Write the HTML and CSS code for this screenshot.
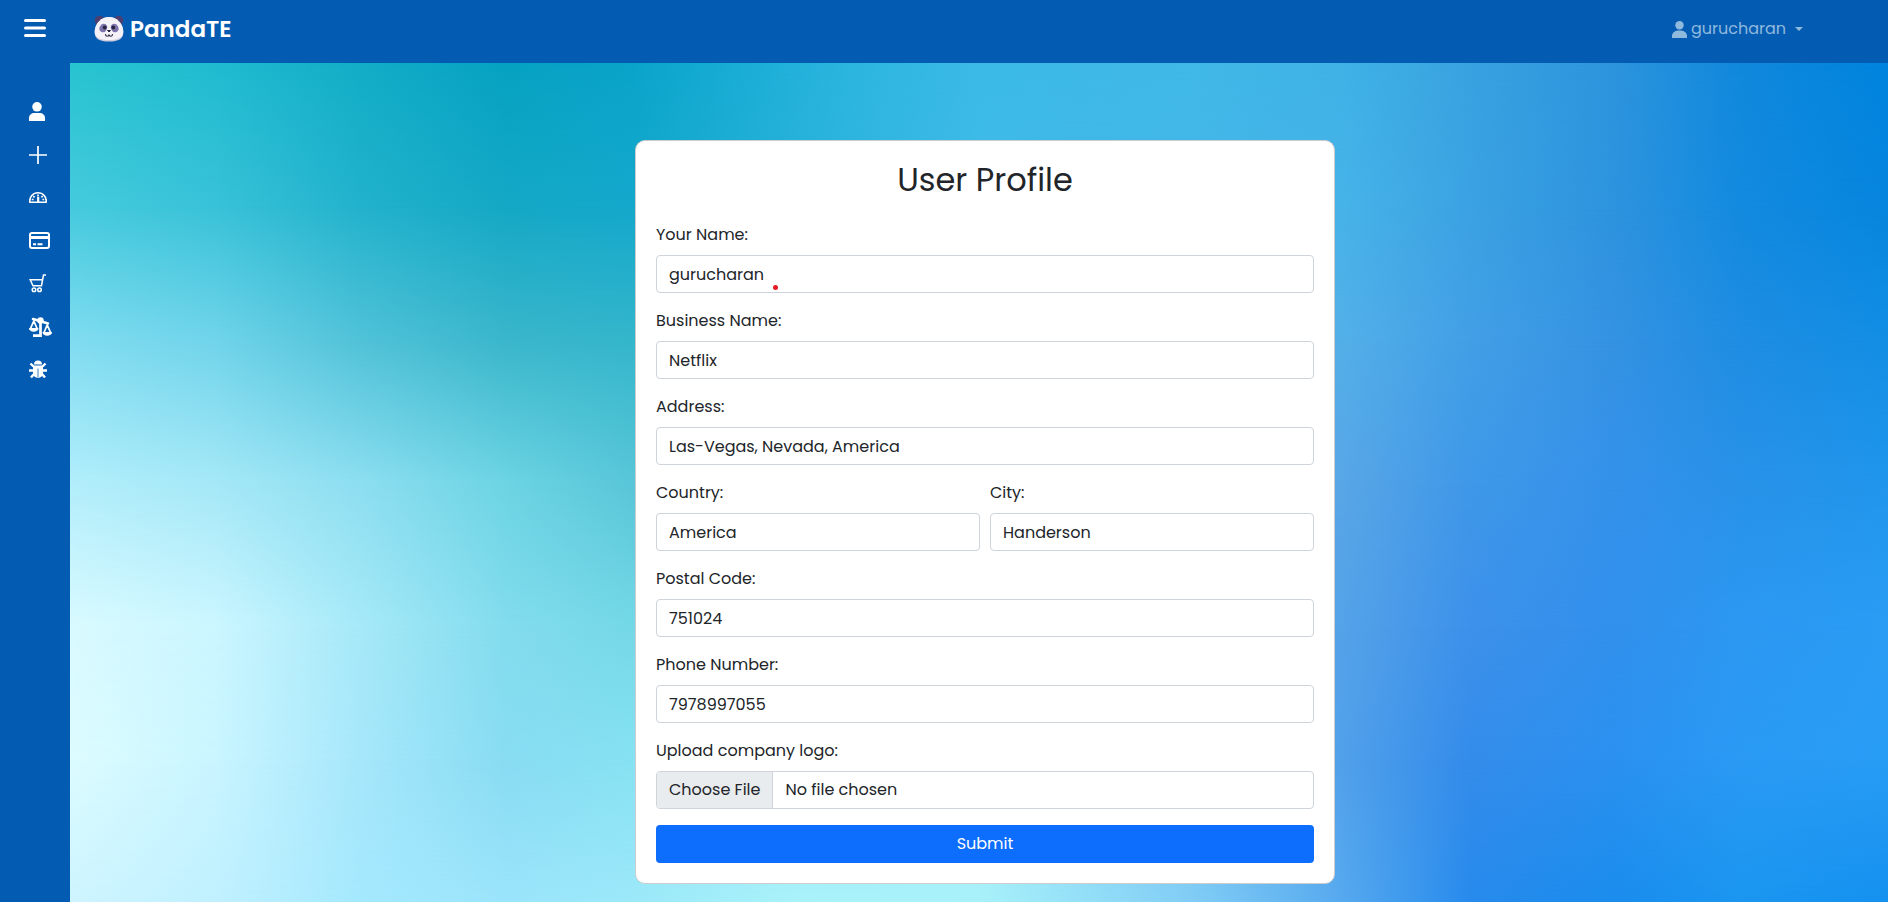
FILE: index.html
```html
<!DOCTYPE html>
<html lang="en">
<head>
<meta charset="utf-8">
<meta name="viewport" content="width=device-width, initial-scale=1">
<title>PandaTE - User Profile</title>
<link rel="stylesheet" href="styles.css">
</head>
<body>
<div class="app">
  <header class="navbar">
    <button class="menu-toggle" type="button" aria-label="Toggle menu">
      <svg width="22" height="18" viewBox="0 0 22 18"><path d="M1.5 1.5h19M1.5 9h19M1.5 16.500h19" stroke="#fff" stroke-width="3" stroke-linecap="round"/></svg>
    </button>
    <a class="brand" href="#">
      <svg width="30" height="28" viewBox="0 0 30 28">
        <circle cx="5.500" cy="5.500" r="4.800" fill="#4b3f72"/><circle cx="24.500" cy="5.500" r="4.800" fill="#4b3f72"/>
        <path d="M15 2C22 2 29 8 29.300 17c.2 7-5 9.500-14.300 9.500S.5 24 .7 17C1 8 8 2 15 2z" fill="#d3cde0"/>
        <path d="M15 2C22 2 29 8 29.300 16c.2 6.500-5 9-14.300 9S.5 22.500.7 16C1 8 8 2 15 2z" fill="#f4f2f7"/>
        <ellipse cx="9.300" cy="13" rx="3.700" ry="4.300" transform="rotate(25 9.300 13)" fill="#7d74ad"/><ellipse cx="20.700" cy="13" rx="3.700" ry="4.300" transform="rotate(-25 20.700 13)" fill="#7d74ad"/>
        <circle cx="10.700" cy="12.500" r="1.900" fill="#2b2440"/><circle cx="19.300" cy="12.500" r="1.900" fill="#2b2440"/>
        <path d="M13.500 15.500h3L15 17z" fill="#2b2440" stroke="#2b2440" stroke-linejoin="round"/>
        <path d="M11.500 19.500c.3 2.300 3.300 2.300 3.500 0 .2 2.300 3.200 2.300 3.500 0" fill="none" stroke="#2b2440" stroke-width="1.200" stroke-linecap="round"/>
      </svg>
      <span>PandaTE</span>
    </a>
    <button class="user-menu" type="button">
      <svg width="15" height="17" viewBox="0 0 15 17" fill="currentColor"><circle cx="7.500" cy="4.200" r="4.200"/><path d="M0 17v-2c0-3.500 3-5.500 7.500-5.500S15 11.500 15 15v2z"/></svg>
      <span>gurucharan</span>
      <span class="caret"></span>
    </button>
  </header>
  <div class="body">
    <nav class="sidebar">
      <a href="#" aria-label="Profile"><svg width="16" height="19" viewBox="0 0 16 19" fill="#fff"><circle cx="8" cy="4.800" r="4.800"/><path d="M0 19v-3c0-3 2.500-5 5.500-5h5c3 0 5.500 2 5.500 5v3z"/></svg></a>
      <a href="#" aria-label="Add"><svg width="18" height="18" viewBox="0 0 18 18"><path d="M9 0v18M0 9h18" stroke="#fff" stroke-width="1.700"/></svg></a>
      <a href="#" aria-label="Dashboard"><svg width="18" height="11" viewBox="0 0 18 11" fill="none" stroke="#fff"><path d="M.8 10.200C.2 5 4 .8 9 .8s8.800 4.200 8.200 9.400z" stroke-width="1.600" stroke-linejoin="round"/><path d="M9 2.500v2M4.300 4l1.300 1.300M13.700 4l-1.300 1.300M2.800 7.500h1.800M13.400 7.500h1.800" stroke-width="1.700"/><path d="M9.200 5v5" stroke-width="2.200"/></svg></a>
      <a href="#" aria-label="Billing"><svg width="21" height="17" viewBox="0 0 21 17"><rect x="1" y="1" width="19" height="15" rx="2" fill="none" stroke="#fff" stroke-width="2"/><path d="M1 5.500h19" stroke="#fff" stroke-width="3"/><path d="M4 12.200h3M8.500 12.200h5" stroke="#fff" stroke-width="2"/></svg></a>
      <a href="#" aria-label="Cart"><svg width="18" height="19" viewBox="0 0 18 19" fill="none" stroke="#fff" stroke-width="1.500"><path d="M17 1h-2.500l-2 10.700H4L1.200 5.700h12.200"/><circle cx="5" cy="15.800" r="1.800"/><circle cx="10.500" cy="15.800" r="1.800"/></svg></a>
      <a href="#" aria-label="Compare"><svg width="23" height="20" viewBox="0 0 23 20" fill="none" stroke="#fff"><path d="M4 2l15 4.500" stroke-width="2.500" stroke-linecap="round"/><circle cx="11.500" cy="3.400" r="3.200" fill="#fff" stroke="none"/><path d="M11.500 4v14.700H4" stroke-width="2.700"/><path d="M4.800 4L1.300 12h7zM18.200 8l-3.400 8h7z" stroke-width="1.800" stroke-linejoin="round"/><path d="M0 11h9.500c0 5-9.500 5-9.500 0zM13.500 15H23c0 5-9.500 5-9.500 0z" fill="#fff" stroke="none"/></svg></a>
      <a href="#" aria-label="Report a bug"><svg width="18" height="19" viewBox="0 0 18 19"><path d="M5 4.500a4 4 0 0 1 8 0z" fill="#fff"/><path d="M1.500 3.500L4.500 6.500M16.500 3.500L13.500 6.500M0 10.500h18M2 17.500l3-3.500M16 17.500l-3-3.500" stroke="#fff" stroke-width="2.400"/><path d="M4 5.500h10V13a5 5 0 0 1-10 0z" fill="#fff"/><path d="M9 8.500v9" stroke="#5b94cd" stroke-width="1.200"/></svg></a>
    </nav>
    <main class="content">
      <div class="mesh" aria-hidden="true">
        <div class="mesh-row row-1"></div>
        <div class="mesh-row row-2"></div>
        <div class="mesh-row row-3"></div>
        <div class="mesh-row row-4"></div>
        <div class="mesh-row row-5"></div>
        <div class="mesh-row row-6"></div>
        <div class="mesh-row row-7"></div>
      </div>
      <form class="card">
        <h1>User Profile</h1>
        <div class="field"><label for="name">Your Name:</label>
          <div class="marked"><input id="name" type="text" value="gurucharan"><span class="dot"></span></div></div>
        <div class="field"><label for="business">Business Name:</label><input id="business" type="text" value="Netflix"></div>
        <div class="field"><label for="address">Address:</label><input id="address" type="text" value="Las-Vegas, Nevada, America"></div>
        <div class="pair">
          <div class="field"><label for="country">Country:</label><input id="country" type="text" value="America"></div>
          <div class="field"><label for="city">City:</label><input id="city" type="text" value="Handerson"></div>
        </div>
        <div class="field"><label for="postal">Postal Code:</label><input id="postal" type="text" value="751024"></div>
        <div class="field"><label for="phone">Phone Number:</label><input id="phone" type="tel" value="7978997055"></div>
        <div class="field"><label for="logo">Upload company logo:</label><input id="logo" type="file"></div>
        <button class="submit" type="submit">Submit</button>
      </form>
    </main>
  </div>
</div>
</body>
</html>
```
FILE: styles.css
```css
* { box-sizing: border-box; }

body {
  margin: 0;
  font-family: Poppins, Inter, "Open Sans", sans-serif;
  font-size: 16px;
  line-height: 24px;
  color: #212529;
}

svg { display: block; flex: none; }

button { font: inherit; cursor: pointer; }

.app { min-height: 100vh; display: flex; flex-direction: column; }

/* top bar */
.navbar {
  display: flex;
  align-items: center;
  height: 63px;
  padding: 0 85px 5px 24px;
  background: #045cb2;
}
.menu-toggle { padding: 0 0 2px; border: 0; background: none; }
.brand {
  display: flex;
  align-items: center;
  gap: 6px;
  margin-left: 48px;
  color: #fff;
  font-size: 23px;
  font-weight: 600;
  text-decoration: none;
}
.user-menu {
  display: flex;
  align-items: center;
  gap: 4px;
  margin-left: auto;
  padding: 0;
  border: 0;
  background: none;
  color: #90b9de;
}
.caret {
  margin-left: 5px;
  border: 4px solid transparent;
  border-top-color: currentColor;
  border-bottom: 0;
}

.body { flex: 1; display: flex; }

/* icon rail */
.sidebar {
  flex: none;
  width: 70px;
  padding-top: 27px;
  background: #045cb2;
}
.sidebar a { display: flex; align-items: center; height: 43px; padding-left: 29px; }

/* page area */
.content {
  position: relative;
  flex: 1;
  padding: 77px 0 19px 12px;
}

/* gradient mesh: each row is a horizontal blend, faded in from the row above */
.mesh { position: absolute; inset: 0; overflow: hidden; }
.mesh-row { position: absolute; inset: 0; }
.row-1 { background: linear-gradient(90deg, #28c4d1, #20bbd0 8%, #12adc7 16%, #06a2c2 24%, #0aa4ca 31%, #17acd4 36%, #2bb6e0 43%, #3bbae6 50%, #40b8e8 62%, #3fb2e6 70%, #38a2e0 77%, #2c94dd 85%, #1088dc 92%, #0084de); }
.row-2 {
  background: linear-gradient(90deg, #45cadd, #38c2d8 8%, #22b2cc 16%, #14a8c5 24%, #14a8cc 31%, #40bbe8 50%, #46b3e8 70%, #3ba2e2 77%, #2d93de 85%, #128adf 92%, #0685de);
  mask-image: linear-gradient(transparent 0%, #000 17%);
}
.row-3 {
  background: linear-gradient(90deg, #80dcf0, #70d4ea 8%, #50c2d8 16%, #3ab6cb 24%, #34b6cb 31%, #53afe8 70%, #429fe6 77%, #3492e2 85%, #1e8de2 92%, #128ee4);
  mask-image: linear-gradient(transparent 17%, #000 33%);
}
.row-4 {
  background: linear-gradient(90deg, #b2eefb, #a5e8f7 8%, #8cdef0 16%, #6cd4e3 24%, #58c6d8 31%, #58a6e6 70%, #3f98e8 77%, #3491ea 85%, #2892e8 92%, #2096ec);
  mask-image: linear-gradient(transparent 33%, #000 50%);
}
.row-5 {
  background: linear-gradient(90deg, #d9faff, #cbf6ff 8%, #a6e9f8 16%, #82dced 24%, #74d8e6 31%, #54a2e8 70%, #3d91ea 77%, #3190ec 85%, #2c98f2 92%, #2a9cf4);
  mask-image: linear-gradient(transparent 50%, #000 67%);
}
.row-6 {
  background: linear-gradient(90deg, #dcfcff, #c9f5ff 8%, #a6e7fb 16%, #88dcf2 24%, #86e2f2 31%, #a0ecf8 50%, #50a0ea 70%, #348cea 77%, #2b91f0 85%, #2a9af4 92%, #289df5);
  mask-image: linear-gradient(transparent 67%, #000 83%);
}
.row-7 {
  background: linear-gradient(90deg, #cdf4ff, #c0f0ff 8%, #a4e8fd 16%, #9be4fb 24%, #9ce8f9 31%, #aaf2fa 40%, #a8f1fa 50%, #80ccf5 62%, #56a9ee 70%, #278aec 77%, #1a8cec 85%, #1a96f0 92%, #1490ee);
  mask-image: linear-gradient(transparent 83%, #000 100%);
}

/* profile form */
.card {
  position: relative;
  max-width: 700px;
  margin: 0 auto;
  padding: 20px;
  border: 1px solid #ccc;
  border-radius: 10px;
  background: #fff;
}
h1 {
  margin: 0 0 24px;
  font-size: 32px;
  font-weight: 400;
  line-height: 38px;
  text-align: center;
}
.field { display: flex; flex-direction: column; gap: 8px; margin-bottom: 16px; }
.pair { display: grid; grid-template-columns: 1fr 1fr; gap: 10px; }
.marked { position: relative; }
.dot {
  position: absolute;
  left: 117px;
  bottom: 3px;
  width: 5px;
  height: 5px;
  border-radius: 50%;
  background: #e51c23;
}
input {
  display: block;
  width: 100%;
  height: 38px;
  padding: 6px 12px;
  border: 1px solid #ced4da;
  border-radius: 4px;
  background: #fff;
  color: #212529;
  font: inherit;
}
input[type="file"] { padding-left: 0; overflow: hidden; }
input[type="file"]::file-selector-button {
  height: 36px;
  margin: -6px 12px -6px 0;
  padding: 6px 12px;
  border: 0;
  border-right: 1px solid #ced4da;
  background: #e9ecef;
  color: #212529;
  font: inherit;
}
.submit {
  display: block;
  width: 100%;
  height: 38px;
  border: 0;
  border-radius: 4px;
  background: #0d6efd;
  color: #fff;
}
```
